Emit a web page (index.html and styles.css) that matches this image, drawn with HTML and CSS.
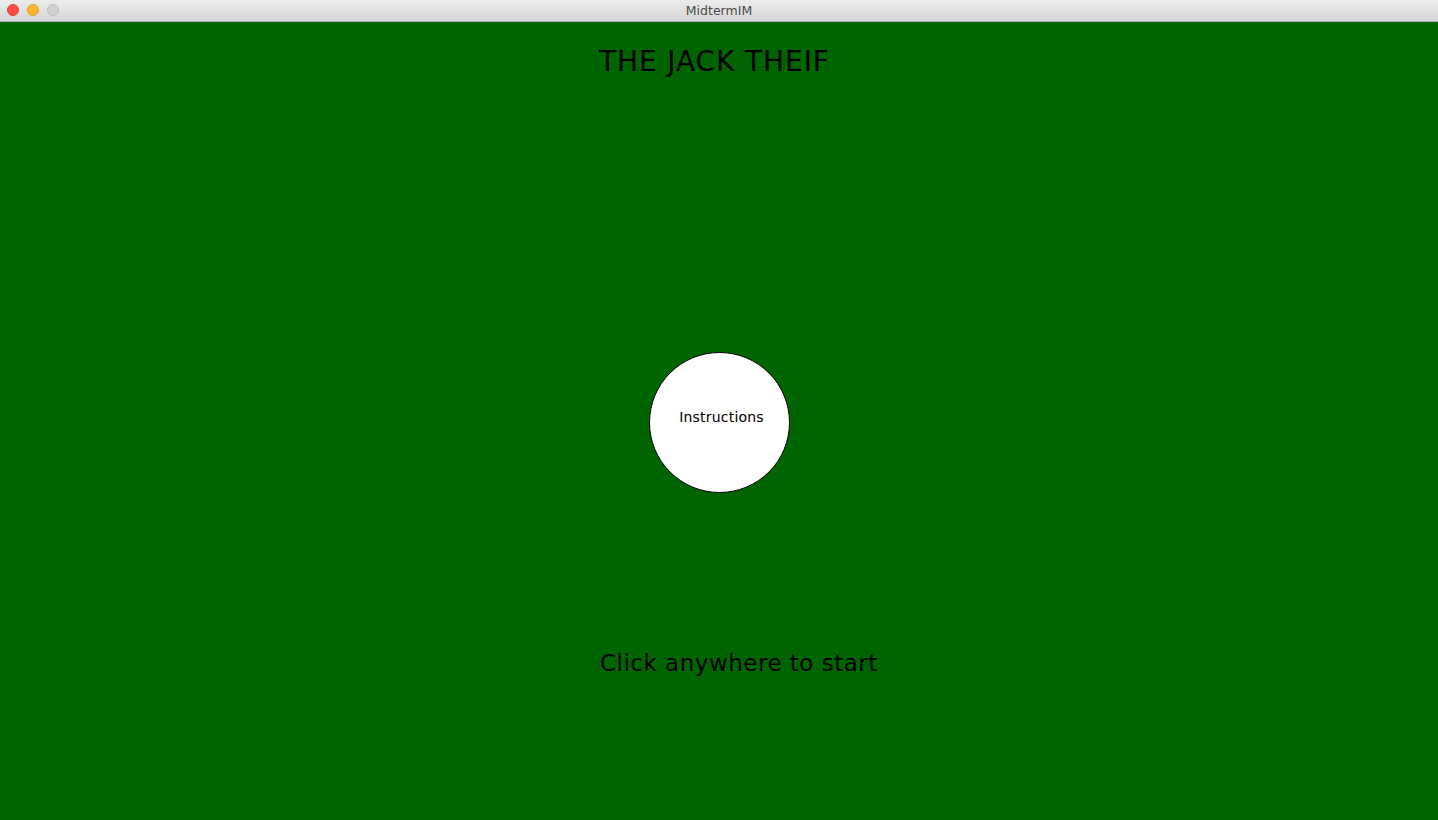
FILE: index.html
```html
<!DOCTYPE html>
<html>
<head>
<meta charset="utf-8">
<title>MidtermIM</title>
<link rel="stylesheet" href="styles.css">
</head>
<body>
<div class="window">
  <div class="titlebar">
    <div class="lights">
      <span class="light red"></span>
      <span class="light yellow"></span>
      <span class="light gray"></span>
    </div>
    <div class="wtitle">MidtermIM</div>
  </div>
  <main class="canvas">
    <h1 class="game-title">THE JACK THEIF</h1>
    <div class="circle-btn"><span>Instructions</span></div>
    <p class="start">Click anywhere to start</p>
  </main>
</div>
</body>
</html>
```
FILE: styles.css
```css
html, body {
  margin: 0;
  padding: 0;
  width: 1438px;
  height: 820px;
  overflow: hidden;
}
.window {
  display: flex;
  flex-direction: column;
  width: 1438px;
  height: 820px;
}
.titlebar {
  height: 21px;
  border-bottom: 1px solid #b1b1b1;
  background: linear-gradient(#ececec, #d6d6d6);
  display: flex;
  align-items: center;
  justify-content: center;
  position: relative;
  flex: none;
}
.lights {
  position: absolute;
  left: 7px;
  top: 4px;
  display: flex;
  gap: 8px;
}
.light {
  width: 12px;
  height: 12px;
  border-radius: 50%;
  box-sizing: border-box;
}
.red { background: #fc4a47; border: 1px solid #e0403c; }
.yellow { background: #fdb52a; border: 1px solid #dea22a; }
.gray { background: #d0d0d0; border: 1px solid #bdbdbd; }
.wtitle {
  font-family: "DejaVu Sans", sans-serif;
  font-size: 12.5px;
  color: #4a4a4a;
}
.canvas {
  flex: 1;
  background: #006400;
  display: flex;
  flex-direction: column;
  align-items: flex-start;
  padding-left: 600px;
  font-family: "DejaVu Sans", sans-serif;
  color: #000;
}
.game-title {
  margin: 22px 0 0 -1px;
  font-size: 28px;
  font-weight: normal;
  line-height: 36px;
  letter-spacing: 0.9px;
}
.circle-btn {
  margin: 272px 0 0 49px;
  width: 141px;
  height: 141px;
  box-sizing: border-box;
  border: 1px solid #000;
  border-radius: 50%;
  background: #fff;
  display: flex;
  justify-content: center;
  padding-top: 54px;
}
.circle-btn span {
  font-size: 14px;
  line-height: 20px;
  margin-left: 4px;
  letter-spacing: 0.2px;
}
.start {
  margin: 155px 0 0 0;
  font-size: 23px;
  line-height: 30px;
  letter-spacing: 0.5px;
}
```
